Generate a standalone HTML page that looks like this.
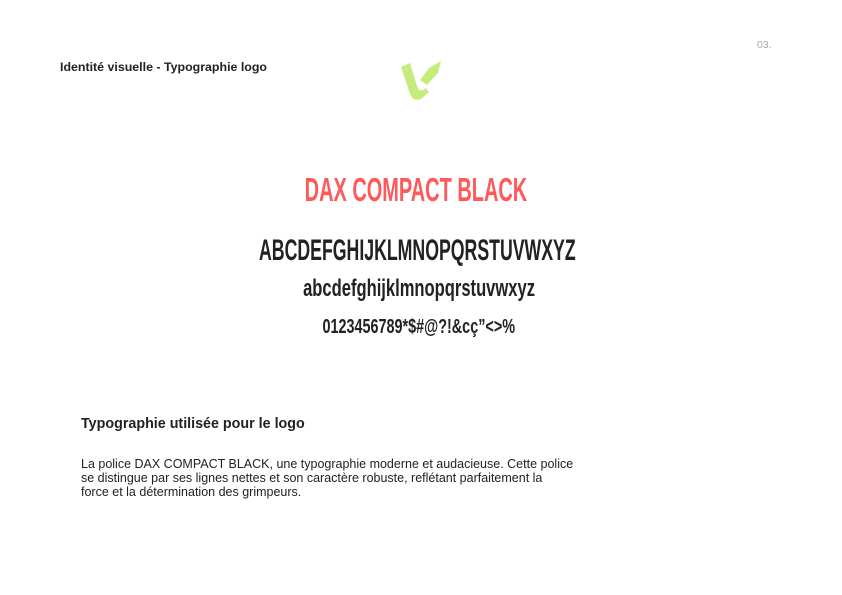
<!DOCTYPE html>
<html><head><meta charset="utf-8"><style>
body{margin:0;width:842px;height:595px;background:#fff;position:relative;overflow:hidden;font-family:"Liberation Sans",sans-serif;color:#222}
.a{position:absolute;white-space:nowrap}
.c{position:absolute;left:0;width:842px;text-align:center;font-family:"Liberation Sans Narrow","Liberation Sans",sans-serif;font-weight:bold;white-space:nowrap}
.c span{display:inline-block}
</style></head><body>
<div class="a" style="left:60px;top:60px;font-size:12.4px;font-weight:bold">Identité visuelle - Typographie logo</div>
<div class="a" style="left:757px;top:39px;font-size:10.5px;color:#aaa">03.</div>
<svg class="a" style="left:400px;top:60px" width="42" height="42" viewBox="0 0 42 42">
<path d="M1 7 L10 3 L17 26 Q19 32 23 30 L26 28 L29 32 L21 39 Q13 42 10 34 Z" fill="#c5ec7c"/>
<path d="M20 20 L29 8 L41 1 L38 13 L27 25 Z" fill="#c5ec7c"/>
</svg>
<div class="c" style="top:170px;font-size:33px;color:#ff5a5a;line-height:40px;margin-left:-5px"><span style="transform:scaleX(0.605)">DAX COMPACT BLACK</span></div>
<div class="c" style="top:233px;font-size:30px;line-height:36px;margin-left:-4px"><span style="transform:scaleX(0.59)">ABCDEFGHIJKLMNOPQRSTUVWXYZ</span></div>
<div class="c" style="top:274px;font-size:24px;line-height:30px;margin-left:-2px"><span style="transform:scaleX(0.69)">abcdefghijklmnopqrstuvwxyz</span></div>
<div class="c" style="top:314px;font-size:20px;line-height:26px;margin-left:-2px"><span style="transform:scaleX(0.72)">0123456789*$#@?!&amp;cç”&lt;&gt;%</span></div>
<div class="a" style="left:81px;top:416px;font-size:14.3px;font-weight:bold">Typographie utilisée pour le logo</div>
<div class="a" style="left:81px;top:457px;font-size:12.5px;line-height:14px">La police DAX COMPACT BLACK, une typographie moderne et audacieuse. Cette police<br>se distingue par ses lignes nettes et son caractère robuste, reflétant parfaitement la<br>force et la détermination des grimpeurs.</div>
</body></html>
